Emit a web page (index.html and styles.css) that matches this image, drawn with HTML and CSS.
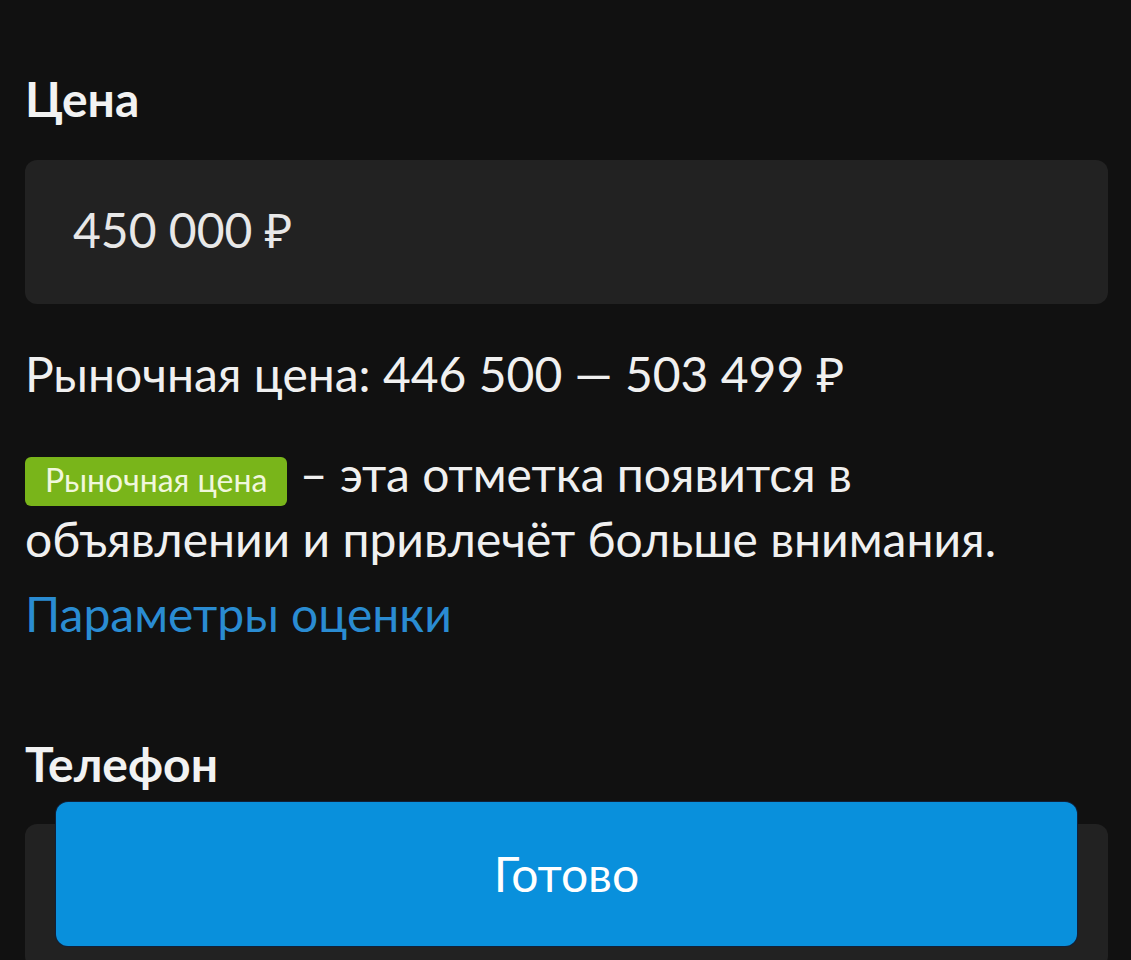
FILE: index.html
```html
<!DOCTYPE html>
<html lang="ru">
<head>
  <meta charset="UTF-8" />
  <meta name="viewport" content="width=device-width, initial-scale=1.0"/>
  <title>Цена</title>
  <link rel="stylesheet" href="styles.css">
</head>
<body>
  <main class="form">
    <!-- Price -->
    <section class="field">
      <h2 class="field-title">Цена</h2>
      <div class="field-input">450 000 ₽</div>
      <p class="market-price">Рыночная цена: 446 500 — 503 499 ₽</p>
      <p class="hint"><span class="badge">Рыночная цена</span> – эта отметка появится в объявлении и привлечёт больше внимания.</p>
      <a class="link" href="#">Параметры оценки</a>
    </section>

    <!-- Phone -->
    <section class="field field-phone">
      <h2 class="field-title">Телефон</h2>
      <div class="field-input"></div>
    </section>
  </main>

  <button class="done-button">Готово</button>
</body>
</html>
```

FILE: styles.css
```css
body {
  margin: 0;
  background-color: #111111;
  color: #f0f0f0;
  font-family: Lato, "Noto Sans", sans-serif;
  font-size: 48px;
  height: 960px;
  overflow: hidden;
}

.form {
  padding: 70px 23px 0 25px;
}

.field-title {
  margin: 0;
  font-size: 48px;
  font-weight: 700;
  line-height: 1.2;
  color: #f2f2f2;
}

.field-input {
  margin-top: 32px;
  height: 144px;
  box-sizing: border-box;
  padding: 0 48px 4px;
  display: flex;
  align-items: center;
  background-color: #222222;
  border-radius: 12px;
  color: #e8e8e8;
}

.market-price {
  margin: 41px 0 0 0;
  line-height: 1.2;
}

.hint {
  margin: 39px 0 0 0;
  line-height: 65px;
}

.badge {
  display: inline-block;
  background-color: #79b51a;
  color: #f0f7dc;
  font-size: 32px;
  line-height: 46px;
  padding: 0 20px 3px 20px;
  border-radius: 6px;
}

.link {
  display: block;
  margin-top: 14px;
  color: #2a8cd2;
  text-decoration: none;
  line-height: 1.2;
}

.field-phone {
  margin-top: 92px;
}

.done-button {
  position: absolute;
  left: 56px;
  top: 802px;
  width: 1021px;
  height: 144px;
  border: none;
  border-radius: 12px;
  background-color: #0990dc;
  box-shadow: 0 0 0 1px #10203a;
  color: #ffffff;
  font-family: Lato, "Noto Sans", sans-serif;
  font-size: 48px;
  padding: 0 0 2px;
}
```
